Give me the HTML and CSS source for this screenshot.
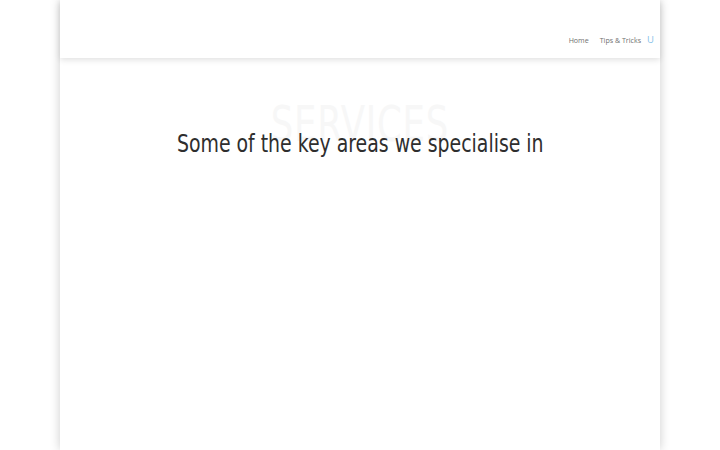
FILE: index.html
```html
<!DOCTYPE html>
<html>
<head>
<meta charset="utf-8">
<link rel="stylesheet" href="styles.css">
</head>
<body>
<div class="page">
  <header class="header">
    <nav class="nav">
      <a class="nav-link" href="#">Home</a>
      <a class="nav-link" href="#">Tips &amp; Tricks</a>
      <span class="search">U</span>
    </nav>
  </header>
  <main class="main">
    <section class="intro">
      <div class="ghost"><span class="ghost-text">SERVICES</span></div>
      <h1 class="title"><span class="title-text">Some of the key areas we specialise in</span></h1>
    </section>
  </main>
</div>
</body>
</html>
```
FILE: styles.css
```css
html, body {
  margin: 0;
  padding: 0;
  background: #ffffff;
  height: 100%;
}
body {
  font-family: "Open Sans", sans-serif;
  overflow: hidden;
}
.page {
  width: 600px;
  margin: 0 auto;
  min-height: 100%;
  background: #fff;
  box-shadow: 0 0 10px 0 rgba(0,0,0,0.2);
}
.header {
  height: 58px;
  box-shadow: 0 2px 6px rgba(0,0,0,0.12);
  display: flex;
  align-items: flex-end;
  justify-content: flex-end;
  position: relative;
}
.nav {
  display: flex;
  align-items: center;
  padding: 0 6px 13px 0;
}
.nav-link {
  font-size: 7.1px;
  color: #707070;
  text-decoration: none;
  line-height: 10px;
  margin-right: 11px;
}
.nav-link:nth-child(2) {
  margin-right: 6px;
}
.search {
  font-size: 9.5px;
  color: #86bfe9;
  line-height: 10px;
}
.main {
  padding-top: 40px;
}
.intro {
  position: relative;
  text-align: center;
}
.ghost {
  position: absolute;
  left: 0;
  right: 0;
  top: 0;
  font-family: "DejaVu Sans Condensed", sans-serif;
  font-size: 50px;
  line-height: 52px;
  color: #f7f7f7;
}
.ghost-text {
  display: inline-block;
  transform: scaleX(0.79);
  letter-spacing: 1px;
}
.title {
  position: relative;
  margin: 0;
  padding-top: 31px;
  font-family: "DejaVu Sans Condensed", sans-serif;
  font-weight: normal;
  font-size: 25px;
  line-height: 30px;
  color: #2e2e2e;
}
.title-text {
  display: inline-block;
  transform: scaleX(0.84);
  white-space: nowrap;
}
```
